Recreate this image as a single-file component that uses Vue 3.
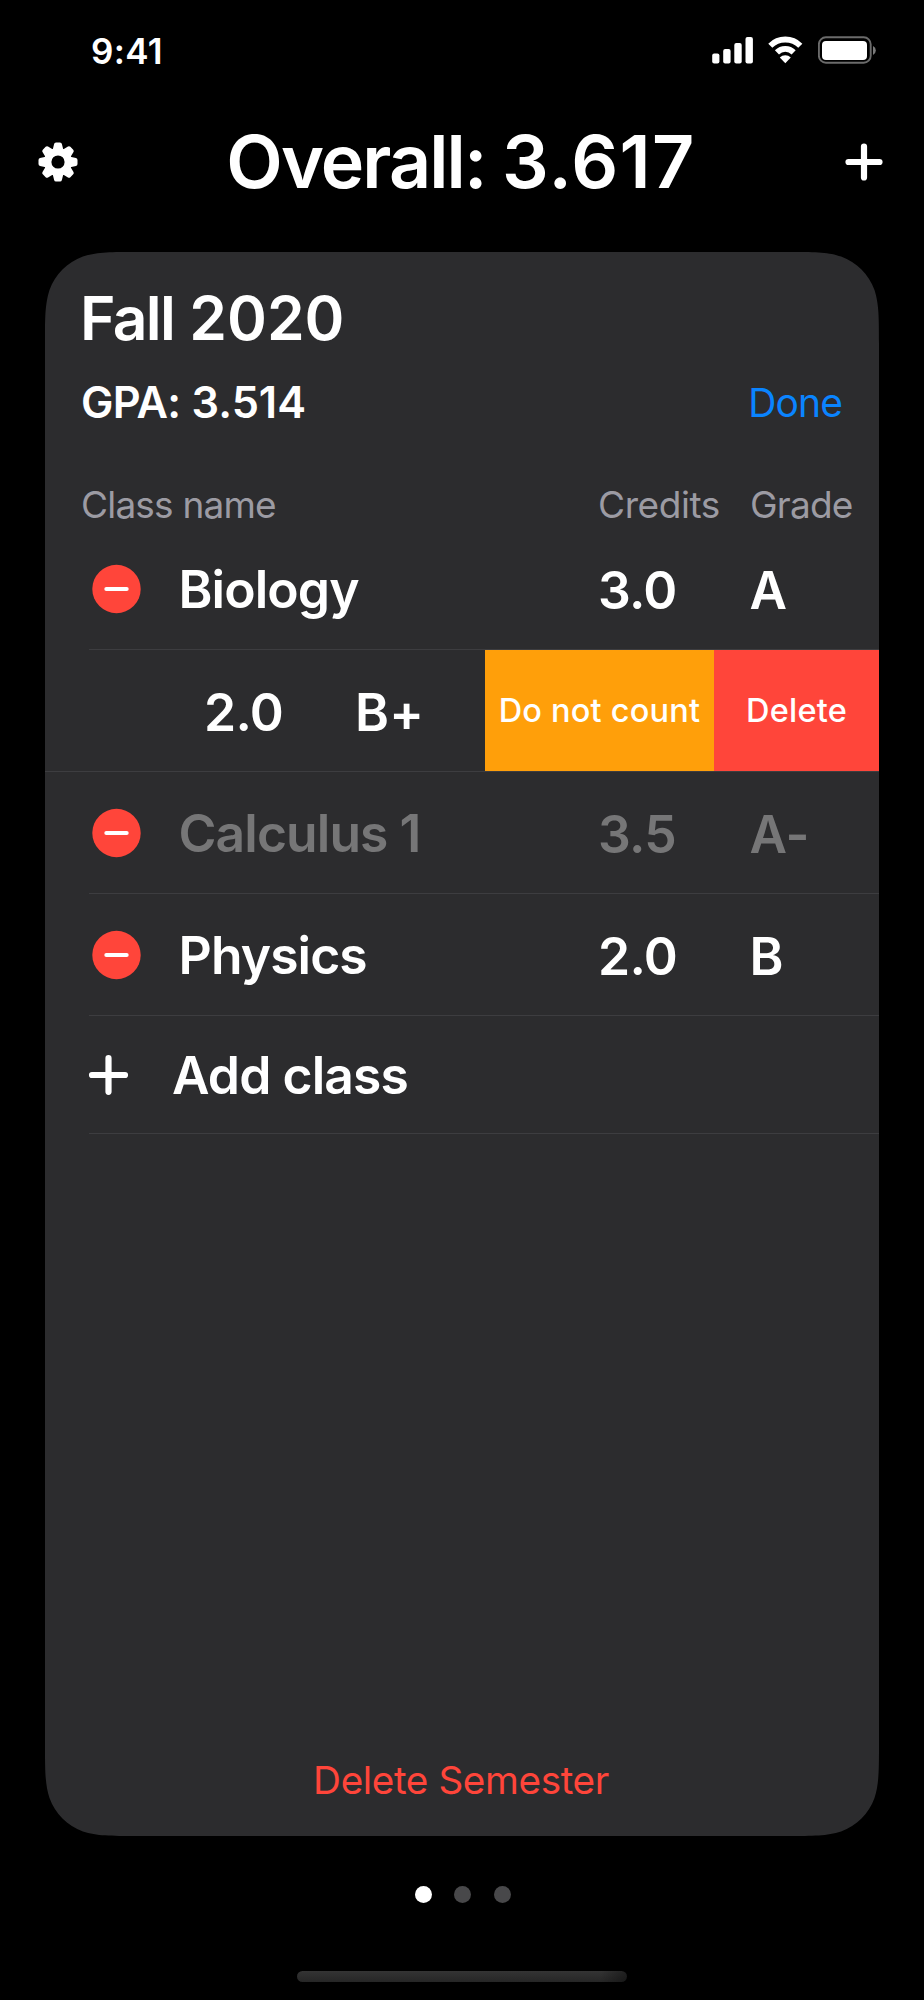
<template>
  <div class="screen">
    <header class="status-bar">
      <span class="status-time">9:41</span>
      <div class="status-icons">
        <svg class="icon-signal" width="42" height="30" viewBox="0 0 42 30">
          <rect x="0.2" y="18.4" width="7.2" height="10" rx="2" />
          <rect x="11.2" y="14" width="7.4" height="14.4" rx="2" />
          <rect x="22.3" y="8" width="7.4" height="20.4" rx="2" />
          <rect x="33.5" y="2" width="7.4" height="26.4" rx="2" />
        </svg>
        <svg class="icon-wifi" width="40" height="30" viewBox="0 0 40 30">
          <path class="wifi-arc" d="M5.3 10.7A21.2 21.2 0 0 1 35.3 10.7" />
          <path class="wifi-arc" d="M11.95 17.35A11.8 11.8 0 0 1 28.65 17.35" />
          <path d="M20.3 28.2L14.8 22.6A7.9 7.9 0 0 1 25.8 22.6Z" />
        </svg>
        <svg class="icon-battery" width="60" height="30" viewBox="0 0 60 30">
          <rect class="battery-shell" x="0.9" y="2.3" width="51.8" height="25.4" rx="7" />
          <rect x="4" y="6" width="45" height="19" rx="4" />
          <path class="battery-nub" d="M55 11a5 5 0 0 1 0 9z" />
        </svg>
      </div>
    </header>

    <div class="top-bar">
      <button class="icon-btn" aria-label="Settings">
        <svg width="40" height="40" viewBox="-20 -20 40 40">
          <path class="gear-body" d="M0 -14A14 14 0 1 1 0 14A14 14 0 1 1 0 -14ZM0 -6.6A6.6 6.6 0 1 0 0 6.6A6.6 6.6 0 1 0 0 -6.6Z" />
          <path
            v-for="n in 8"
            :key="n"
            d="M-5.6 -11L-3.9 -18Q-3.5 -19.5 -2 -19.5H2Q3.5 -19.5 3.9 -18L5.6 -11Z"
            :transform="`rotate(${n * 45})`"
          />
        </svg>
      </button>
      <h1 class="overall"><span class="overall-label">Overall: </span><span class="overall-value">{{ overall }}</span></h1>
      <button class="icon-btn" aria-label="Add semester">
        <svg width="40" height="40" viewBox="-20 -20 40 40">
          <path class="plus" d="M-15.5 0H15.5M0 -15.5V15.5" />
        </svg>
      </button>
    </div>

    <section class="card">
      <h2 class="semester"><span class="semester-term">{{ semester.term }}</span>&nbsp;{{ semester.year }}</h2>
      <div class="gpa-row">
        <span class="gpa"><span class="gpa-label">GPA: </span>{{ semester.gpa }}</span>
        <button class="done">Done</button>
      </div>

      <div class="columns">
        <span class="col-name">Class name</span>
        <span class="col-credits">Credits</span>
        <span class="col-grade">Grade</span>
      </div>

      <template v-for="(item, i) in semester.classes" :key="i">
        <div v-if="item.swiped" class="row row-swiped">
          <span class="credits">{{ item.credits }}</span>
          <span class="grade">{{ item.grade }}</span>
          <div class="actions">
            <button class="action action-skip">Do not count</button>
            <button class="action action-delete">Delete</button>
          </div>
        </div>
        <div v-else class="row" :class="{ 'row-muted': item.muted }">
          <svg class="remove" width="50" height="50" viewBox="-25.5 -25 50 50">
            <circle r="24.2" />
            <path d="M-10.2 0H10.2" />
          </svg>
          <span class="name">{{ item.name }}</span>
          <span class="credits">{{ item.credits }}</span>
          <span class="grade">{{ item.grade }}</span>
        </div>
      </template>

      <div class="row row-add">
        <svg width="42" height="42" viewBox="-21.5 -21 42 42">
          <path class="plus" d="M-16.5 0H16.5M0 -16.8V16.8" />
        </svg>
        <span class="name">Add class</span>
      </div>

      <button class="delete-semester">Delete Semester</button>
    </section>

    <nav class="pager">
      <span v-for="n in 3" :key="n" class="dot" :class="{ active: n === 1 }"></span>
    </nav>
    <div class="home-indicator"></div>
  </div>
</template>

<script setup>
const overall = '3.617';

const semester = {
  term: 'Fall',
  year: 2020,
  gpa: '3.514',
  classes: [
    { name: 'Biology', credits: '3.0', grade: 'A' },
    { name: '', credits: '2.0', grade: 'B+', swiped: true },
    { name: 'Calculus 1', credits: '3.5', grade: 'A-', muted: true },
    { name: 'Physics', credits: '2.0', grade: 'B' },
  ],
};
</script>

<style>
body {
  background: #000;
}
</style>

<style scoped>
.screen {
  width: 924px;
  height: 2000px;
  display: flex;
  flex-direction: column;
  overflow: hidden;
  background: #000;
  color: #fff;
  font-family: Inter, "Liberation Sans", sans-serif;
}
button {
  margin: 0;
  padding: 0;
  border: 0;
  background: none;
  color: inherit;
  font: inherit;
  white-space: nowrap;
}
h1,
h2 {
  margin: 0;
  font-weight: 600;
}
svg {
  display: block;
  fill: #fff;
  flex: none;
}

/* status bar */
.status-bar {
  height: 100px;
  box-sizing: border-box;
  padding: 35px 46px 0 91px;
  display: flex;
  justify-content: space-between;
}
.status-time {
  height: 32px;
  line-height: 32px;
  font-size: 35px;
  font-weight: 600;
  letter-spacing: 0.3px;
}
.status-icons {
  display: flex;
}
.icon-wifi {
  margin-left: 11px;
}
.icon-battery {
  margin-left: 13px;
}
.wifi-arc {
  fill: none;
  stroke: #fff;
  stroke-width: 5.8;
}
.battery-shell {
  fill: none;
  stroke: #6b6b6b;
  stroke-width: 1.9;
}
.battery-nub {
  fill: #7a7a7a;
}

/* title */
.top-bar {
  height: 152px;
  box-sizing: border-box;
  padding: 0 40px 29px 38px;
  display: flex;
  align-items: center;
  justify-content: space-between;
}
.gear-body {
  fill-rule: evenodd;
}
.plus {
  fill: none;
  stroke: #fff;
  stroke-width: 6.2;
  stroke-linecap: round;
}
.overall {
  font-size: 73.5px;
  line-height: 90px;
  white-space: nowrap;
}
.overall-label {
  letter-spacing: -1.9px;
}
.overall-value {
  letter-spacing: 1.3px;
}

/* semester card */
.card {
  margin: 0 45px;
  width: 834px;
  height: 1584px;
  flex: none;
  display: flex;
  flex-direction: column;
  background: #2c2c2e;
  clip-path: path("M91.7 0H742.3C768.7 0 781.9 0 793.8 3.9L796.1 4.5C811.6 10.1 823.9 22.4 829.5 37.9C834 52.1 834 65.3 834 91.7V1492.3C834 1518.7 834 1531.9 829.5 1546.1C823.9 1561.6 811.6 1573.9 796.1 1579.5C781.9 1584 768.7 1584 742.3 1584H91.7C65.3 1584 52.1 1584 37.9 1579.5C22.4 1573.9 10.1 1561.6 4.5 1546.1C0 1531.9 0 1518.7 0 1492.3V91.7C0 65.3 0 52.1 4.5 37.9C10.1 22.4 22.4 10.1 37.9 4.5C52.1 0 65.3 0 91.7 0Z");
}
.semester {
  padding: 30px 0 0 35px;
  font-size: 60.5px;
  line-height: 72px;
}
.semester-term {
  letter-spacing: -1.7px;
}
.gpa-row {
  height: 52px;
  margin-top: 23px;
  padding: 0 37px 0 36px;
  display: flex;
  justify-content: space-between;
  line-height: 50px;
}
.gpa {
  font-size: 43.3px;
  font-weight: 600;
}
.gpa-label {
  letter-spacing: -0.7px;
  word-spacing: 1px;
}
.done {
  font-size: 39px;
  letter-spacing: -0.9px;
  color: #0a84ff;
}
.columns {
  height: 99px;
  box-sizing: border-box;
  padding: 53px 0 0 36px;
  display: grid;
  grid-template-columns: 517px 152px auto;
  font-size: 37px;
  line-height: 46px;
  letter-spacing: -0.8px;
  color: #9c9ba3;
}
.col-credits {
  letter-spacing: -0.4px;
}

/* class rows */
.row {
  height: 122px;
  box-sizing: border-box;
  padding-left: 46px;
  display: grid;
  grid-template-columns: 87.5px 419.5px 151.5px auto;
  align-items: center;
  font-size: 51.6px;
  font-weight: 600;
  line-height: 60px;
  white-space: nowrap;
  background: linear-gradient(#3d3d40, #3d3d40) 44px 100% / 100% 1px no-repeat;
}
.name {
  letter-spacing: -0.9px;
}
.credits,
.grade {
  padding-top: 2px;
  letter-spacing: -0.7px;
}
/* keeps + and - on the lowercase axis next to capitals */
.grade {
  font-feature-settings: "calt" 0;
  letter-spacing: 0.2px;
}
.remove circle {
  fill: #ff453a;
}
.remove path {
  stroke: #fff;
  stroke-width: 4;
  stroke-linecap: round;
}
.row-muted .name,
.row-muted .credits,
.row-muted .grade {
  color: #767677;
}
.row-swiped {
  padding-left: 159px;
  grid-template-columns: 151px 130px 394px;
  background-position: 0 100%;
}
.actions {
  height: 121px;
  align-self: start;
  display: flex;
}
.action {
  font-size: 32.5px;
  font-weight: 500;
  letter-spacing: 0.2px;
}
.action-skip {
  width: 229px;
  background: #ff9f0a;
}
.action-delete {
  width: 165px;
  background: #ff453a;
}
.row-add {
  height: 118px;
  padding-left: 42px;
  grid-template-columns: 85px auto;
}
.delete-semester {
  margin-top: auto;
  margin-bottom: 31px;
  padding-right: 2px;
  font-size: 38.7px;
  line-height: 50px;
  letter-spacing: -0.4px;
  color: #ff453a;
}

/* footer */
.pager {
  height: 116px;
  padding-left: 1.5px;
  display: flex;
  justify-content: center;
  align-items: center;
  gap: 22.5px;
}
.dot {
  width: 17px;
  height: 17px;
  border-radius: 50%;
  background: #48484a;
}
.dot.active {
  background: #fff;
}
.home-indicator {
  width: 330px;
  height: 11px;
  margin: 19px auto 0;
  border-radius: 6px;
  background: linear-gradient(90deg, transparent 92%, rgba(0, 0, 0, 0.4)), linear-gradient(#343434, #262626);
}
</style>
